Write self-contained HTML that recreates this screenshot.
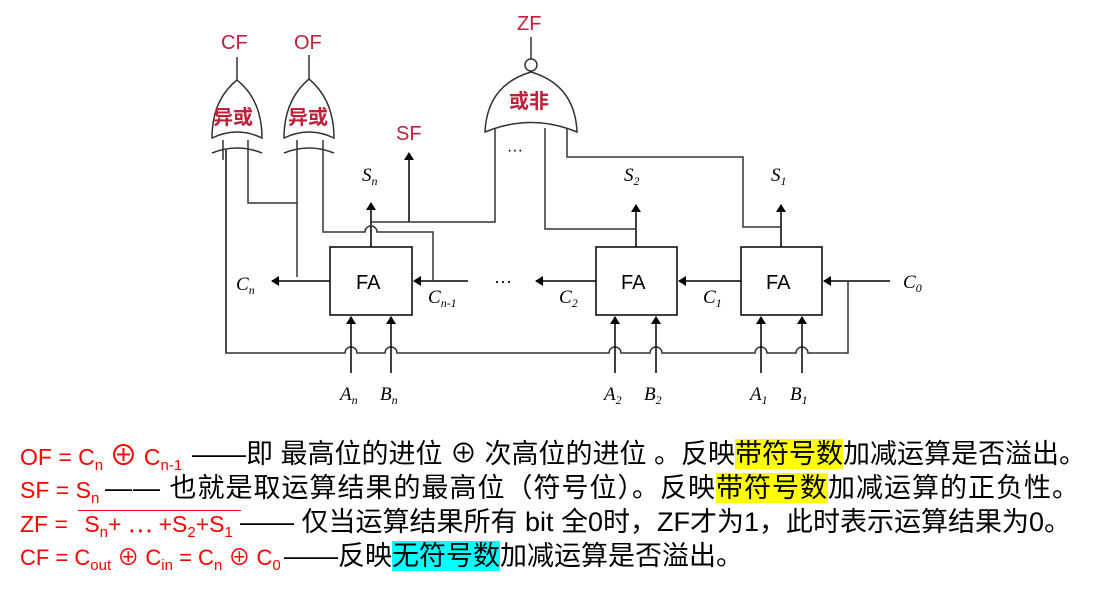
<!DOCTYPE html>
<html><head><meta charset="utf-8"><style>
body{margin:0;width:1120px;height:589px;background:#fff;position:relative;overflow:hidden;font-family:"Liberation Sans","Noto Sans CJK SC",sans-serif}
.t{position:absolute;white-space:nowrap;font-size:27px;line-height:32px}
.r{color:#f00;font-family:"Liberation Sans","Noto Sans CJK SC",sans-serif;font-size:23px}
.k{color:#000}
.y{background:#ff0}
.c{background:#0ff}
sub{font-size:15px;vertical-align:-5px;line-height:0}
svg{position:absolute;left:0;top:0}
.it{font-family:"Liberation Serif",serif;font-style:italic;font-size:19px}
.gt{font-family:"Liberation Sans","Noto Sans CJK SC",sans-serif;fill:#c0203a;font-size:20px}
</style></head><body>
<svg width="1120" height="430" viewBox="0 0 1120 430">
<defs><marker id="a" markerWidth="8" markerHeight="10" refX="7" refY="5" orient="auto" markerUnits="userSpaceOnUse"><path d="M0,0 L8,5 L0,10 z" fill="#000"/></marker></defs>
<g fill="none" stroke="#333" stroke-width="1.5">
<rect x="330" y="247" width="82" height="68" fill="#fff" stroke="#000"/>
<rect x="596" y="247" width="81" height="68" fill="#fff" stroke="#000"/>
<rect x="741" y="247" width="81" height="68" fill="#fff" stroke="#000"/>
<line x1="330" y1="281" x2="272" y2="281" marker-end="url(#a)" stroke="#000"/>
<line x1="468" y1="281" x2="414" y2="281" marker-end="url(#a)" stroke="#000"/>
<line x1="596" y1="281" x2="536" y2="281" marker-end="url(#a)" stroke="#000"/>
<line x1="741" y1="281" x2="679" y2="281" marker-end="url(#a)" stroke="#000"/>
<line x1="890" y1="281" x2="824" y2="281" marker-end="url(#a)" stroke="#000"/>
<path d="M848,281 V353 H808 a6,6 0 0 0 -12,0 H767 a6,6 0 0 0 -12,0 H662 a6,6 0 0 0 -12,0 H621 a6,6 0 0 0 -12,0 H397 a6,6 0 0 0 -12,0 H357 a6,6 0 0 0 -12,0 H226 V150"/>
<line x1="351" y1="373" x2="351" y2="317" marker-end="url(#a)" stroke="#000"/>
<line x1="391" y1="373" x2="391" y2="317" marker-end="url(#a)" stroke="#000"/>
<line x1="615" y1="373" x2="615" y2="317" marker-end="url(#a)" stroke="#000"/>
<line x1="656" y1="373" x2="656" y2="317" marker-end="url(#a)" stroke="#000"/>
<line x1="761" y1="373" x2="761" y2="317" marker-end="url(#a)" stroke="#000"/>
<line x1="802" y1="373" x2="802" y2="317" marker-end="url(#a)" stroke="#000"/>
<line x1="371" y1="247" x2="371" y2="203" marker-end="url(#a)" stroke="#000"/>
<line x1="636" y1="247" x2="636" y2="205" marker-end="url(#a)" stroke="#000"/>
<line x1="781" y1="247" x2="781" y2="205" marker-end="url(#a)" stroke="#000"/>
<line x1="409" y1="222" x2="409" y2="153" marker-end="url(#a)" stroke="#000"/>
<path d="M371,222 H495 V128"/>
<path d="M323,140 V232 H365 a6,6 0 0 1 12,0 H433 V281"/>
<path d="M248,140 V203 H297"/>
<path d="M297,140 V277"/>
<path d="M223,140 V160 M226,150 V353"/>
<path d="M545,128 V229 H636"/>
<path d="M567,128 V157 H743 V227 H781"/>
<path d="M212,138 Q237,126 262,138 Q262,100 237,80 Q212,100 212,138 z" fill="#fff"/>
<path d="M212,153 Q237,143 262,153" />
<path d="M284,138 Q309,126 334,138 Q334,100 309,79 Q284,100 284,138 z" fill="#fff"/>
<path d="M284,153 Q309,143 334,153" />
<line x1="237" y1="80" x2="237" y2="57"/>
<line x1="309" y1="79" x2="309" y2="55"/>
<path d="M485,132 Q531,113 577,132 Q575,85 531,72 Q487,85 485,132 z" fill="#fff"/>
<circle cx="531" cy="65" r="6" fill="#fff"/>
<line x1="531" y1="59" x2="531" y2="37"/>
</g>
<g font-family="Liberation Sans, sans-serif" fill="#000">
<text x="356" y="289" font-size="20">FA</text>
<text x="621" y="289" font-size="20">FA</text>
<text x="766" y="289" font-size="20">FA</text>
<text x="494" y="287" font-size="18">···</text>
<text x="507" y="155" font-size="16">···</text>
</g>
<g class="it" fill="#000">
<text x="362" y="181">S<tspan font-size="12" dy="4">n</tspan></text>
<text x="624" y="181">S<tspan font-size="12" dy="4">2</tspan></text>
<text x="771" y="181">S<tspan font-size="12" dy="4">1</tspan></text>
<text x="236" y="290">C<tspan font-size="12" dy="4">n</tspan></text>
<text x="428" y="303">C<tspan font-size="12" dy="4">n-1</tspan></text>
<text x="559" y="303">C<tspan font-size="12" dy="4">2</tspan></text>
<text x="703" y="303">C<tspan font-size="12" dy="4">1</tspan></text>
<text x="903" y="288">C<tspan font-size="12" dy="4">0</tspan></text>
<text x="340" y="400">A<tspan font-size="12" dy="4">n</tspan></text>
<text x="380" y="400">B<tspan font-size="12" dy="4">n</tspan></text>
<text x="604" y="400">A<tspan font-size="12" dy="4">2</tspan></text>
<text x="644" y="400">B<tspan font-size="12" dy="4">2</tspan></text>
<text x="750" y="400">A<tspan font-size="12" dy="4">1</tspan></text>
<text x="790" y="400">B<tspan font-size="12" dy="4">1</tspan></text>
</g>
<g class="gt">
<text x="221" y="49">CF</text>
<text x="294" y="49">OF</text>
<text x="517" y="30">ZF</text>
<text x="396" y="140">SF</text>
<text x="213" y="124" font-weight="bold">异或</text>
<text x="288" y="124" font-weight="bold">异或</text>
<text x="509" y="108" font-weight="bold">或非</text>
</g>
</svg>

<div class="t r" style="left:20px;top:440px">OF = C<sub>n</sub> <span style="font-size:28px">⊕</span> C<sub>n-1</sub></div>
<div class="t k" style="left:192px;top:438px">——即 最高位的进位 ⊕ 次高位的进位 。反映<span class="y">带符号数</span>加减运算是否溢出。</div>
<div class="t r" style="left:20px;top:474px">SF = S<sub>n</sub></div>
<div class="t k" style="left:105px;top:472px;letter-spacing:1px">—— 也就是取运算结果的最高位（符号位）。反映<span class="y">带符号数</span>加减运算的正负性。</div>
<div class="t r" style="left:20px;top:508px">ZF = <span style="display:inline-block;border-top:1.5px solid #f00;line-height:26px;padding:0 8px 0 6px;margin-left:4px">S<sub>n</sub>+ ⋯ +S<sub>2</sub>+S<sub>1</sub></span></div>
<div class="t k" style="left:240px;top:506px">—— 仅当运算结果所有 bit 全0时，ZF才为1，此时表示运算结果为0。</div>
<div class="t r" style="left:20px;top:542px;font-size:22px">CF = C<sub>out</sub> ⊕ C<sub>in</sub> = C<sub>n</sub> ⊕ C<sub>0</sub></div>
<div class="t k" style="left:284px;top:540px">——反映<span class="c">无符号数</span>加减运算是否溢出。</div>
</body></html>
